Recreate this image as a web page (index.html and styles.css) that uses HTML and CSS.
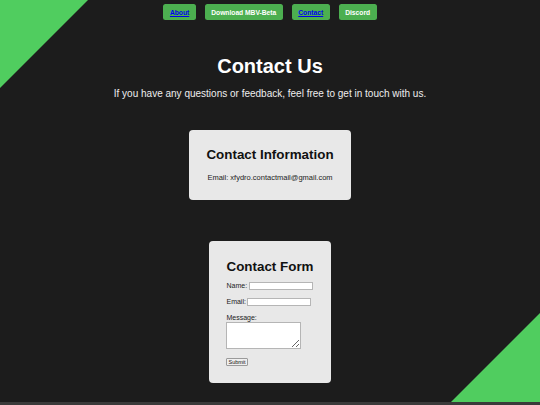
FILE: index.html
```html
<!DOCTYPE html>
<html lang="en">
<head>
  <meta charset="UTF-8">
  <meta name="viewport" content="width=device-width, initial-scale=1.0">
  <title>Contact - MBV</title>
  <link rel="stylesheet" href="styles.css">
</head>
<body>
  <div class="corner corner-top"></div>
  <div class="corner corner-bottom"></div>

  <nav class="nav">
    <button class="nav-btn"><a href="#">About</a></button>
    <button class="nav-btn">Download MBV-Beta</button>
    <button class="nav-btn"><a href="#">Contact</a></button>
    <button class="nav-btn">Discord</button>
  </nav>

  <h1 class="page-title">Contact Us</h1>
  <p class="intro">If you have any questions or feedback, feel free to get in touch with us.</p>

  <div class="card">
    <h2>Contact Information</h2>
    <p class="email">Email: xfydro.contactmail@gmail.com</p>
  </div>

  <div class="card form-card">
    <h2>Contact Form</h2>
    <form class="contact-form">
      <div class="row">
        <label for="name">Name:</label>
        <input type="text" id="name" class="field">
      </div>
      <div class="row">
        <label for="email">Email:</label>
        <input type="email" id="email" class="field">
      </div>
      <label for="message" class="block-label">Message:</label>
      <textarea id="message"></textarea>
      <button type="submit" class="submit">Submit</button>
    </form>
  </div>
</body>
</html>
```

FILE: styles.css
```css
:root {
  --bg: #1c1c1c;
  --green: #50cd5f;
  --button-green: #4caf50;
  --card: #e8e8e8;
}

html {
  background: #3a3a3a;
}

body {
  font-family: 'Liberation Sans', Arial, sans-serif;
  margin: 0;
  width: 540px;
  height: 402px;
  background-color: var(--bg);
  color: #fff;
  text-align: center;
  position: relative;
  overflow: hidden;
}

.corner {
  position: absolute;
  width: 88px;
  height: 88px;
  background: var(--green);
}

.corner-top {
  top: 0;
  left: 0;
  clip-path: polygon(0 0, 100% 0, 0 100%);
}

.corner-bottom {
  right: 0;
  bottom: 0;
  width: 89px;
  height: 89px;
  clip-path: polygon(100% 0, 100% 100%, 0 100%);
}

.nav {
  display: flex;
  justify-content: center;
  gap: 9px;
  padding-top: 4px;
  position: relative;
}

.nav-btn {
  height: 16px;
  padding: 0 6.5px;
  border: none;
  border-radius: 2.5px;
  background-color: var(--button-green);
  color: #fff;
  font-family: 'Liberation Sans', Arial, sans-serif;
  font-size: 6.7px;
  font-weight: bold;
}

.nav-btn a {
  color: #0000ee;
}

.page-title {
  font-size: 20px;
  margin: 35px 0 0;
  position: relative;
}

.intro {
  font-size: 10px;
  color: #eee;
  margin: 10px 0 0;
}

.card {
  width: fit-content;
  margin: 30.5px auto 0;
  padding: 17px 17.5px 18px;
  background: var(--card);
  border-radius: 4px;
  color: #111;
}

.card h2 {
  font-size: 13.4px;
  margin: 0 0 11.5px;
}

.email {
  font-size: 7.5px;
  color: #222;
  margin: 0;
}

.form-card {
  margin-top: 41px;
  padding-top: 17.5px;
  padding-bottom: 17px;
}

.form-card h2 {
  margin-bottom: 8px;
}

.contact-form {
  text-align: left;
  font-size: 7px;
  color: #222;
}

.row {
  display: flex;
  align-items: center;
  gap: 1.5px;
  height: 8px;
  margin-bottom: 8px;
}

.field {
  width: 64px;
  height: 8px;
  box-sizing: border-box;
  border: 1px solid #b5b5b5;
  background: #fff;
  padding: 0;
}

.block-label {
  display: block;
  line-height: 8px;
}

textarea {
  display: block;
  width: 75px;
  height: 27px;
  box-sizing: border-box;
  border: 1px solid #b5b5b5;
  background: #fff;
  margin: 0 0 9px;
  padding: 0;
}

.submit {
  display: block;
  height: 8px;
  padding: 0 1px;
  font-family: 'Liberation Sans', Arial, sans-serif;
  font-size: 5.5px;
  line-height: 6px;
  border: 1px solid #9a9a9a;
  border-radius: 1px;
  background: #efefef;
  color: #111;
}
```
